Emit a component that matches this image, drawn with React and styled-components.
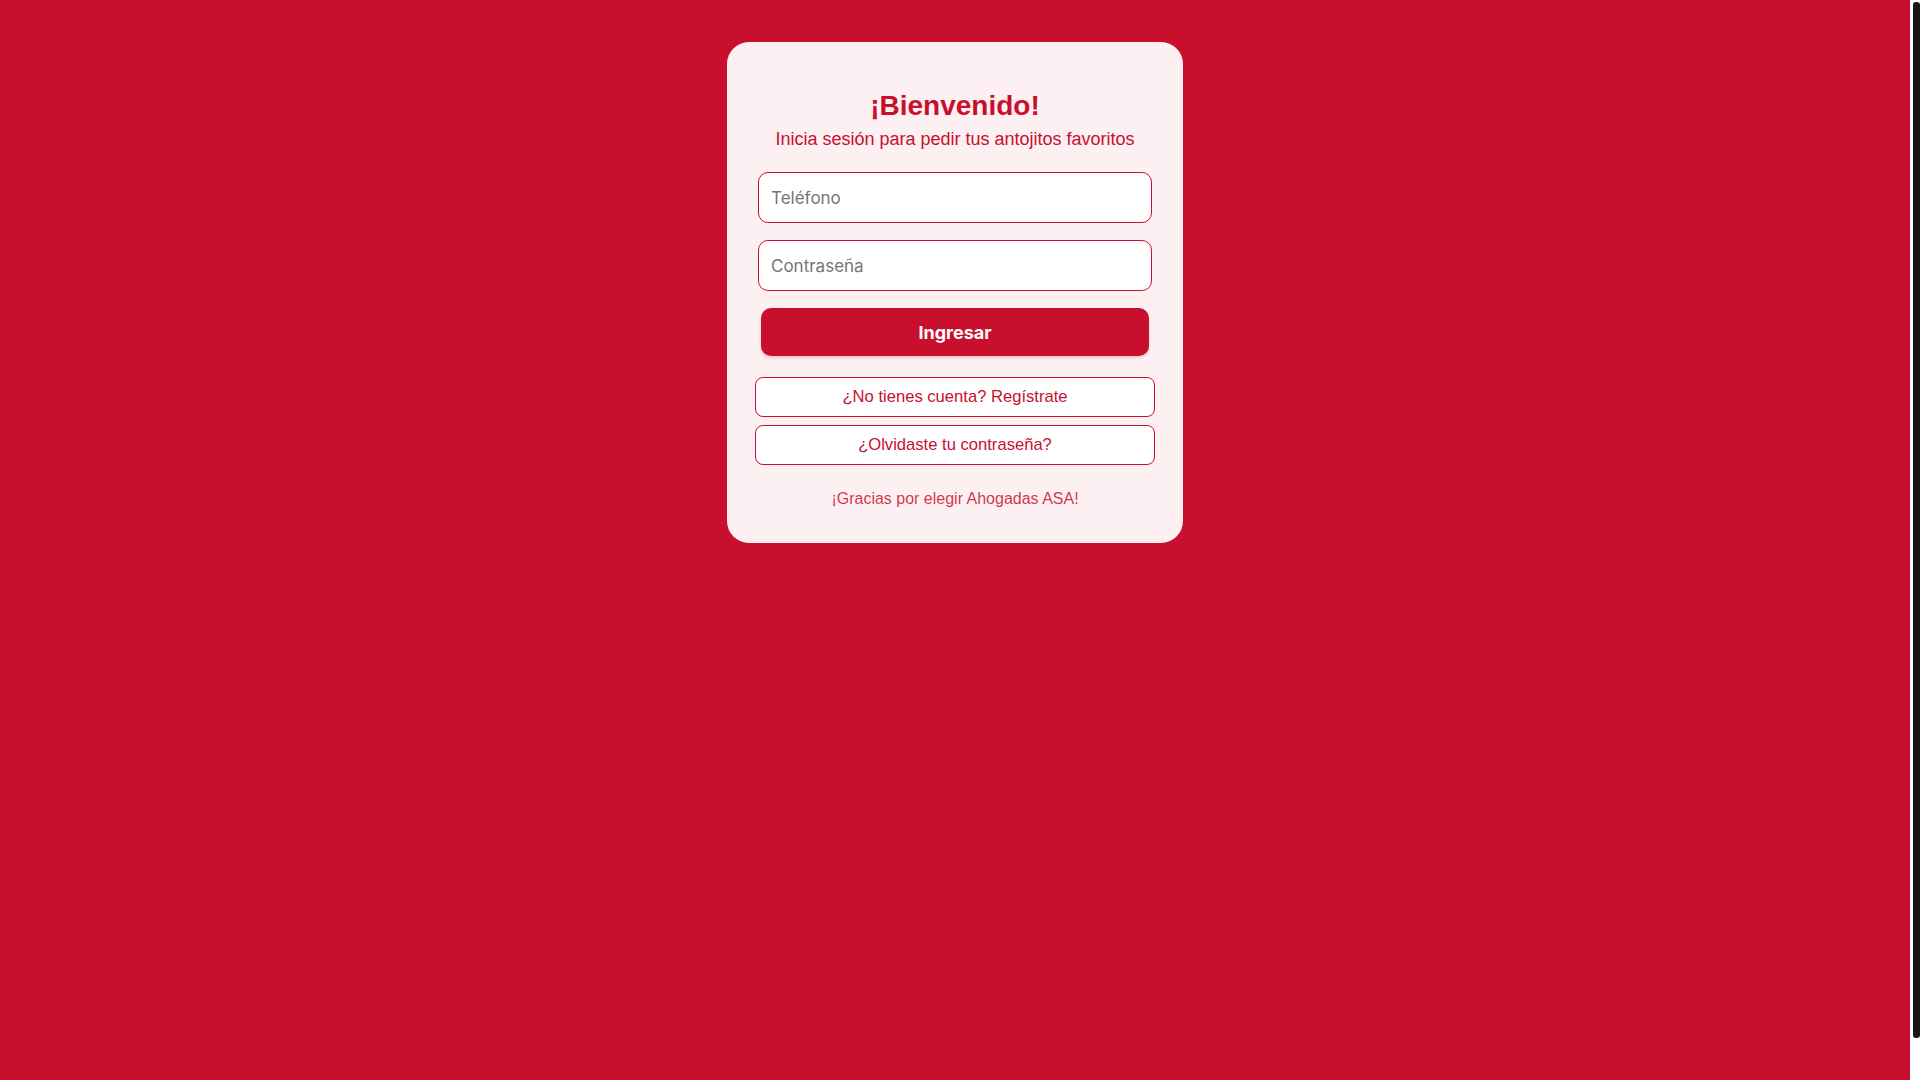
import React, { useState } from "react";
import styled, { createGlobalStyle } from "styled-components";

const red = "#c8102e";

const GlobalStyle = createGlobalStyle`
  body {
    margin: 0;
    background: ${red};
    font-family: "Liberation Sans", Arial, sans-serif;
  }
  * { box-sizing: border-box; }
`;

const Page = styled.div`
  min-height: 100vh;
  padding: 42px 10px 0 0;
  display: flex;
  justify-content: center;
  align-items: flex-start;
`;

// the page's scrollbar, as the screenshot shows it
const ScrollTrack = styled.div`
  position: fixed;
  top: 0;
  right: 0;
  width: 10px;
  height: 100vh;
  background: #fff;
  padding: 2px 0 0 3px;
`;

const ScrollThumb = styled.div`
  width: 7px;
  height: 1036px;
  background: #151515;
  border-radius: 3px;
`;

const Card = styled.div`
  width: 456px;
  background: #fcf0f2;
  border-radius: 22px;
  padding: 48px 28px 35px;
  display: flex;
  flex-direction: column;
  align-items: center;
`;

const Title = styled.h1`
  margin: 0;
  font-size: 28px;
  line-height: 32px;
  font-weight: 700;
  color: ${red};
`;

const Subtitle = styled.p`
  margin: 6px 0 22px;
  font-size: 18px;
  line-height: 22px;
  color: ${red};
`;

const Form = styled.form`
  width: 100%;
  display: flex;
  flex-direction: column;
  align-items: center;
`;

const Input = styled.input`
  width: 394px;
  height: 51px;
  margin-bottom: ${(p) => p.$gap}px;
  padding: 0 12px;
  border: 1px solid ${red};
  border-radius: 10px;
  background: #fff;
  font-family: Inter, "Noto Sans", sans-serif;
  font-size: 17px;
  color: #222;
  outline: none;
  &::placeholder { color: #757575; }
`;

const Submit = styled.button`
  width: 388px;
  height: 48px;
  border: none;
  border-radius: 10px;
  background: ${red};
  color: #fff;
  font-family: Inter, "Noto Sans", sans-serif;
  font-size: 18px;
  font-weight: 700;
  box-shadow: 0 2px 3px rgba(200, 16, 46, 0.18);
  cursor: pointer;
`;

const Links = styled.div`
  width: 100%;
  margin-top: 21px;
  display: flex;
  flex-direction: column;
  gap: 8px;
`;

const LinkButton = styled.button`
  width: 100%;
  height: 40px;
  border: 1px solid ${red};
  border-radius: 8px;
  background: #fff;
  color: ${red};
  font-family: "Liberation Sans", Arial, sans-serif;
  font-size: 16.6px;
  cursor: pointer;
`;

const Footer = styled.p`
  margin: 25px 0 0;
  font-size: 16px;
  line-height: 18px;
  color: rgba(200, 16, 46, 0.85);
`;

export default function App() {
  const [phone, setPhone] = useState("");
  const [password, setPassword] = useState("");

  const handleSubmit = (e) => {
    e.preventDefault();
  };

  return (
    <>
      <GlobalStyle />
      <Page>
        <Card>
          <Title>¡Bienvenido!</Title>
          <Subtitle>Inicia sesión para pedir tus antojitos favoritos</Subtitle>
          <Form onSubmit={handleSubmit}>
            <Input
              type="tel"
              placeholder="Teléfono"
              value={phone}
              $gap={17}
              onChange={(e) => setPhone(e.target.value)}
            />
            <Input
              type="password"
              placeholder="Contraseña"
              value={password}
              $gap={17}
              onChange={(e) => setPassword(e.target.value)}
            />
            <Submit type="submit">Ingresar</Submit>
          </Form>
          <Links>
            <LinkButton type="button">¿No tienes cuenta? Regístrate</LinkButton>
            <LinkButton type="button">¿Olvidaste tu contraseña?</LinkButton>
          </Links>
          <Footer>¡Gracias por elegir Ahogadas ASA!</Footer>
        </Card>
      </Page>
      <ScrollTrack>
        <ScrollThumb />
      </ScrollTrack>
    </>
  );
}
